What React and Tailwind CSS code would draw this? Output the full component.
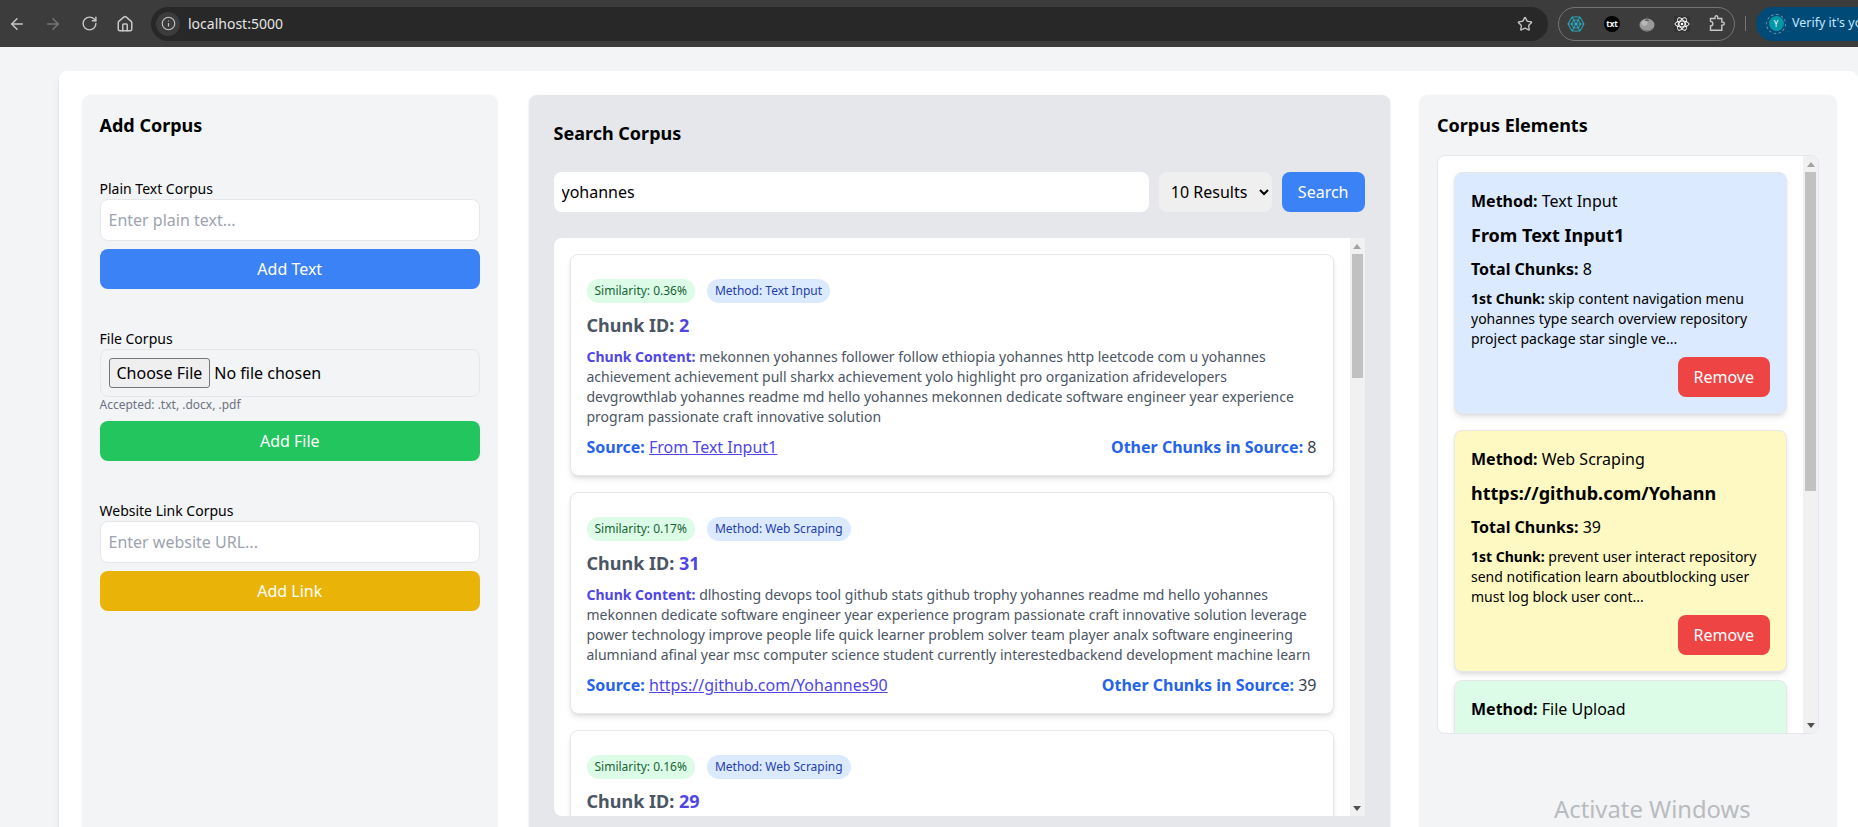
import { ArrowLeft, ArrowRight, RotateCw, House, Info, Star } from "lucide-react";

const results = [
  {
    id: 2,
    similarity: "0.36%",
    method: "Text Input",
    content:
      "mekonnen yohannes follower follow ethiopia yohannes http leetcode com u yohannes achievement achievement pull sharkx achievement yolo highlight pro organization afridevelopers devgrowthlab yohannes readme md hello yohannes mekonnen dedicate software engineer year experience program passionate craft innovative solution",
    source: "From Text Input1",
    other: 8,
  },
  {
    id: 31,
    similarity: "0.17%",
    method: "Web Scraping",
    content:
      "dlhosting devops tool github stats github trophy yohannes readme md hello yohannes mekonnen dedicate software engineer year experience program passionate craft innovative solution leverage power technology improve people life quick learner problem solver team player analx software engineering alumniand afinal year msc computer science student currently interestedbackend development machine learn",
    source: "https://github.com/Yohannes90",
    other: 39,
  },
];

const corpus = [
  {
    method: "Text Input",
    title: "From Text Input1",
    total: 8,
    chunk: "skip content navigation menu yohannes type search overview repository project package star single ve...",
    color: "bg-[#dbeafe] mb-4",
  },
  {
    method: "Web Scraping",
    title: "https://github.com/Yohann",
    total: 39,
    chunk: "prevent user interact repository send notification learn aboutblocking user must log block user cont...",
    color: "bg-[#fef9c3] mb-2",
  },
];

function Scrollbar({ thumb }) {
  return (
    <div className="w-[15px] shrink-0 bg-[#f1f1f1] flex flex-col items-center">
      <div className="h-4 flex items-center justify-center">
        <div className="w-0 h-0 border-x-[4px] border-x-transparent border-b-[5px] border-b-[#a3a3a3]"></div>
      </div>
      <div className={`w-[11px] bg-[#c1c1c1] ${thumb}`}></div>
      <div className="flex-1"></div>
      <div className="h-4 flex items-center justify-center">
        <div className="w-0 h-0 border-x-[4px] border-x-transparent border-t-[5px] border-t-[#505050]"></div>
      </div>
    </div>
  );
}

function Badges({ similarity, method }) {
  return (
    <div className="flex gap-3 mt-2 mb-2 text-xs">
      <span className="bg-[#dcfce7] text-[#166534] px-2 py-1 rounded-full">Similarity: {similarity}</span>
      <span className="bg-[#dbeafe] text-[#1e40af] px-2 py-1 rounded-full">Method: {method}</span>
    </div>
  );
}

function ResultCard({ item }) {
  return (
    <div className="bg-white border border-[#e5e7eb] rounded-lg shadow-md p-4 mb-4">
      <Badges similarity={item.similarity} method={item.method} />
      <h3 className="text-lg font-bold text-[#4b5563] mb-2">
        Chunk ID: <span className="text-[#4f46e5]">{item.id}</span>
      </h3>
      <p className="text-sm text-[#4b5563] mb-2">
        <span className="font-bold text-[#4f46e5]">Chunk Content:</span> {item.content}
      </p>
      <div className="flex justify-between text-[#374151]">
        <span>
          <span className="font-bold text-[#2563eb]">Source:</span>{" "}
          <a href="#" className="underline text-[#4f46e5]">{item.source}</a>
        </span>
        <span>
          <span className="font-bold text-[#2563eb]">Other Chunks in Source:</span> {item.other}
        </span>
      </div>
    </div>
  );
}

function CorpusCard({ item }) {
  return (
    <div className={`${item.color} border border-[#e5e7eb] rounded-lg shadow-md p-4 text-black`}>
      <p className="mb-2"><span className="font-bold">Method:</span> {item.method}</p>
      <h3 className="text-lg font-bold mb-2">{item.title}</h3>
      <p className="mb-2"><span className="font-bold">Total Chunks:</span> {item.total}</p>
      <p className="text-sm mb-2"><span className="font-bold">1st Chunk:</span> {item.chunk}</p>
      <div className="flex justify-end">
        <button className="bg-[#ef4444] text-white px-4 py-2 rounded-lg">Remove</button>
      </div>
    </div>
  );
}

function BrowserBar() {
  return (
    <div className="h-[47px] bg-[#3c3c3c] flex items-center overflow-hidden text-[#c7c7c7]">
      <div className="flex -ml-px">
        <div className="w-9 flex justify-center"><ArrowLeft size={18} strokeWidth={2} /></div>
        <div className="w-9 flex justify-center text-[#757575]"><ArrowRight size={18} strokeWidth={2} /></div>
        <div className="w-9 flex justify-center"><RotateCw size={17} strokeWidth={2} /></div>
        <div className="w-9 flex justify-center"><House size={18} strokeWidth={2} /></div>
      </div>
      <div className="ml-2 w-[1397px] shrink-0 h-[34px] rounded-full bg-[#282828] flex items-center pl-[5px] pr-3">
        <div className="w-6 h-6 rounded-full bg-[#3c3c3c] flex items-center justify-center">
          <Info size={15} strokeWidth={1.8} />
        </div>
        <span className="ml-[8px] text-sm text-[#e3e3e3]">localhost:5000</span>
        <Star size={16} strokeWidth={2} className="ml-auto mr-[3px]" />
      </div>
      <div className="ml-[10px] w-[177px] shrink-0 h-[34px] rounded-full border border-[#757575] flex items-center justify-between px-[8px]">
        <svg width="18" height="18" viewBox="0 0 18 18" fill="none" stroke="#2aa3b5" strokeWidth="1.1">
          <path d="M5 2h8l4 7-4 7H5L1 9z" />
          <path d="M6.5 5h5l2 4-2 4h-5l-2-4z" />
          <path d="M5 2l8 14M13 2L5 16M1 9h16" />
        </svg>
        <div className="w-4 h-4 rounded-full bg-black flex items-center justify-center text-[8px] leading-none font-bold text-white">txt</div>
        <svg width="16" height="16" viewBox="0 0 16 16">
          <ellipse cx="8" cy="9" rx="7.5" ry="6.5" fill="#9a9a9a" />
          <ellipse cx="5.5" cy="7" rx="3" ry="2.8" fill="#b8b8b8" />
          <path d="M1.5 11c3 4 10 4 13 0-2 5.5-11 5.5-13 0z" fill="#7c7c7c" />
          <path d="M8 1v4M6 4.5h4" stroke="#5a5a5a" strokeWidth="1.1" />
        </svg>
        <svg width="16" height="16" viewBox="0 0 16 16" fill="none" stroke="#ffffff" strokeWidth="1">
          <rect width="16" height="16" fill="#333333" stroke="none" />
          <ellipse cx="8" cy="8" rx="7" ry="3" />
          <ellipse cx="8" cy="8" rx="7" ry="3" transform="rotate(60 8 8)" />
          <ellipse cx="8" cy="8" rx="7" ry="3" transform="rotate(120 8 8)" />
          <circle cx="8" cy="8" r="1.3" fill="#ffffff" stroke="none" />
        </svg>
        <svg width="17" height="17" viewBox="0 0 17 17" fill="none" stroke="#c7c7c7" strokeWidth="1.4">
          <path d="M1.5 3.5H6V2.2a1.4 1.4 0 0 1 2.8 0v1.3h4v3.6h1a1.5 1.5 0 0 1 0 3h-1v5.2H1.5v-4.3a2.3 2.3 0 0 0 0-4.6z" />
        </svg>
      </div>
      <div className="ml-[10px] w-px h-[15px] bg-[#757575] shrink-0"></div>
      <div className="ml-[10px] w-[130px] shrink-0 h-[34px] rounded-full bg-[#004a77] flex items-center pl-[10px] text-[12.5px] text-[#c2e7ff] whitespace-nowrap">
        <div className="w-5 h-5 rounded-full border border-dashed border-[#7c98aa] flex items-center justify-center">
          <div className="w-[15px] h-[15px] rounded-full bg-[#0097a7] flex items-center justify-center text-[8px] leading-none text-white">Y</div>
        </div>
        <span className="ml-[6px]">Verify it's you</span>
      </div>
    </div>
  );
}

function App() {
  return (
    <div className="relative h-[827px] overflow-hidden bg-[#f3f4f6] font-['Noto_Sans',sans-serif] text-black">
      <BrowserBar />
      <div className="pt-6 pl-[59px]">
        <div className="bg-white rounded-lg shadow-md py-6 pl-[23.5px] pr-[22px]">
          <div className="grid grid-cols-[414.5px_860px_416px] gap-x-[31.5px]">
            <div className="bg-[#f3f4f6] border border-[#f3f4f6] rounded-lg shadow-sm p-4">
              <h2 className="text-lg font-bold -mt-px mb-[40px]">Add Corpus</h2>
              <div className="mb-10">
                <label className="block text-sm">Plain Text Corpus</label>
                <input
                  placeholder="Enter plain text..."
                  className="w-full bg-white border border-[#e5e7eb] rounded-lg px-2 py-2 placeholder:text-[#9ca3af]"
                />
                <button className="w-full mt-2 bg-[#3b82f6] text-white py-2 rounded-lg">Add Text</button>
              </div>
              <div className="mb-10">
                <label className="block text-sm">File Corpus</label>
                <input
                  type="file"
                  className="block w-full border border-[#e5e7eb] rounded-lg p-2 file:bg-[#efefef] file:border file:border-[#767676] file:rounded-[3px] file:px-[7px] file:py-[2px] file:mr-1 file:text-black"
                />
                <p className="text-xs text-[#6b7280]">Accepted: .txt, .docx, .pdf</p>
                <button className="w-full mt-2 bg-[#22c55e] text-white py-2 rounded-lg">Add File</button>
              </div>
              <div>
                <label className="block text-sm">Website Link Corpus</label>
                <input
                  placeholder="Enter website URL..."
                  className="w-full bg-white border border-[#e5e7eb] rounded-lg px-2 py-2 placeholder:text-[#9ca3af]"
                />
                <button className="w-full mt-2 bg-[#eab308] text-white py-2 rounded-lg">Add Link</button>
              </div>
            </div>

            <div className="-mr-px bg-[#e5e7eb] border border-[#e5e7eb] rounded-lg shadow-sm p-6">
              <h2 className="text-lg font-bold -mt-px mb-[25px]">Search Corpus</h2>
              <div className="flex gap-[10px] mb-[26px]">
                <input defaultValue="yohannes" className="flex-1 min-w-0 h-10 bg-white rounded-lg px-2" />
                <select className="h-10 w-[113px] bg-[#efefef] rounded-lg pl-2">
                  <option>10 Results</option>
                </select>
                <button className="h-10 bg-[#3b82f6] text-white px-4 rounded-lg">Search</button>
              </div>
              <div className="h-[578px] bg-white rounded-l-lg flex overflow-hidden">
                <div className="flex-1 min-w-0 p-4">
                  {results.map((item) => (
                    <ResultCard key={item.id} item={item} />
                  ))}
                  <div className="bg-white border border-[#e5e7eb] rounded-lg shadow-md p-4">
                    <Badges similarity="0.16%" method="Web Scraping" />
                    <h3 className="text-lg font-bold text-[#4b5563] mb-2">
                      Chunk ID: <span className="text-[#4f46e5]">29</span>
                    </h3>
                  </div>
                </div>
                <Scrollbar thumb="h-[124px]" />
              </div>
            </div>

            <div className="bg-[#f3f4f6] border border-[#f3f4f6] rounded-lg shadow-sm p-4">
              <h2 className="text-lg font-bold -mt-px mb-4">Corpus Elements</h2>
              <div className="h-[579px] bg-white border border-[#e5e7eb] rounded-lg flex overflow-hidden">
                <div className="flex-1 min-w-0 p-4">
                  {corpus.map((item) => (
                    <CorpusCard key={item.method} item={item} />
                  ))}
                  <div className="h-[200px] bg-[#dcfce7] border border-[#e5e7eb] rounded-lg shadow-md p-4">
                    <p><span className="font-bold">Method:</span> File Upload</p>
                  </div>
                </div>
                <Scrollbar thumb="h-[319px]" />
              </div>
            </div>
          </div>
        </div>
      </div>
      <div className="absolute left-[1554px] top-[793px] text-[23.8px] leading-8 text-[#b9bbbe]">Activate Windows</div>
    </div>
  );
}

export default App;
